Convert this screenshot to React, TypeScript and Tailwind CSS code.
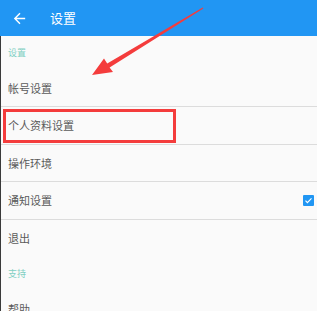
import React from "react";

interface Item {
  label: string;
  divider?: boolean;
  checked?: boolean;
}

const ACCOUNT: Item[] = [
  { label: "帐号设置", divider: true },
  { label: "个人资料设置", divider: true },
  { label: "操作环境", divider: true },
  { label: "通知设置", divider: true, checked: true },
  { label: "退出" },
];

const SUPPORT: Item[] = [{ label: "帮助" }];

const Row: React.FC<Item> = ({ label, divider, checked }) => {
  return (
    <div
      className={`flex items-center justify-between h-[37.4px] pl-[7px] pr-[3px] ${
        divider ? "border-b border-[#dcdcdc]" : ""
      }`}
    >
      <span className="text-[11px] text-[#5a5a5a]">{label}</span>
      {checked && (
        <span className="flex items-center justify-center w-[11px] h-[11px] rounded-[1px] bg-[#2196f3]">
          <svg width="9" height="9" viewBox="0 0 24 24">
            <path
              d="M4 12.5l5 5L20 6.5"
              fill="none"
              stroke="#fff"
              strokeWidth="3.2"
            />
          </svg>
        </span>
      )}
    </div>
  );
};

const Section: React.FC<{ title: string }> = ({ title }) => (
  <div className="flex items-center h-[34px] pl-[7px] text-[9px] text-[#7fcfc2]">
    {title}
  </div>
);

const App: React.FC = () => {
  return (
    <div
      className="relative w-[317px] h-[311px] overflow-hidden bg-[#fafafa]"
      style={{ fontFamily: '"Noto Sans CJK SC", "Noto Sans", sans-serif' }}
    >
      <div className="flex items-center h-[36px] bg-[#2196f3] text-white">
        <svg className="ml-[11px]" width="17" height="17" viewBox="0 0 24 24">
          <path
            d="M20 11H7.83l5.59-5.59L12 4l-8 8 8 8 1.41-1.41L7.83 13H20v-2z"
            fill="#fff"
          />
        </svg>
        <span className="ml-[22px] text-[13px]">设置</span>
      </div>

      <div className="border-l border-[#3a3a3a]">
        <Section title="设置" />
        {ACCOUNT.map((item) => (
          <Row key={item.label} {...item} />
        ))}
        <Section title="支持" />
        {SUPPORT.map((item) => (
          <Row key={item.label} {...item} />
        ))}
      </div>

      {/* annotation: highlight box */}
      <div className="absolute left-[3px] top-[109px] w-[173px] h-[34px] border-[3px] border-[#f43c3c]" />

      {/* annotation: arrow */}
      <svg
        className="absolute left-0 top-0 pointer-events-none"
        width="317"
        height="311"
      >
        <polygon
          points="92,75 113,72 109.6,67.6 203.3,8.4 202.7,7.6 107.2,63.6 104,58.5"
          fill="#f43c3c"
        />
      </svg>
    </div>
  );
};

export default App;
